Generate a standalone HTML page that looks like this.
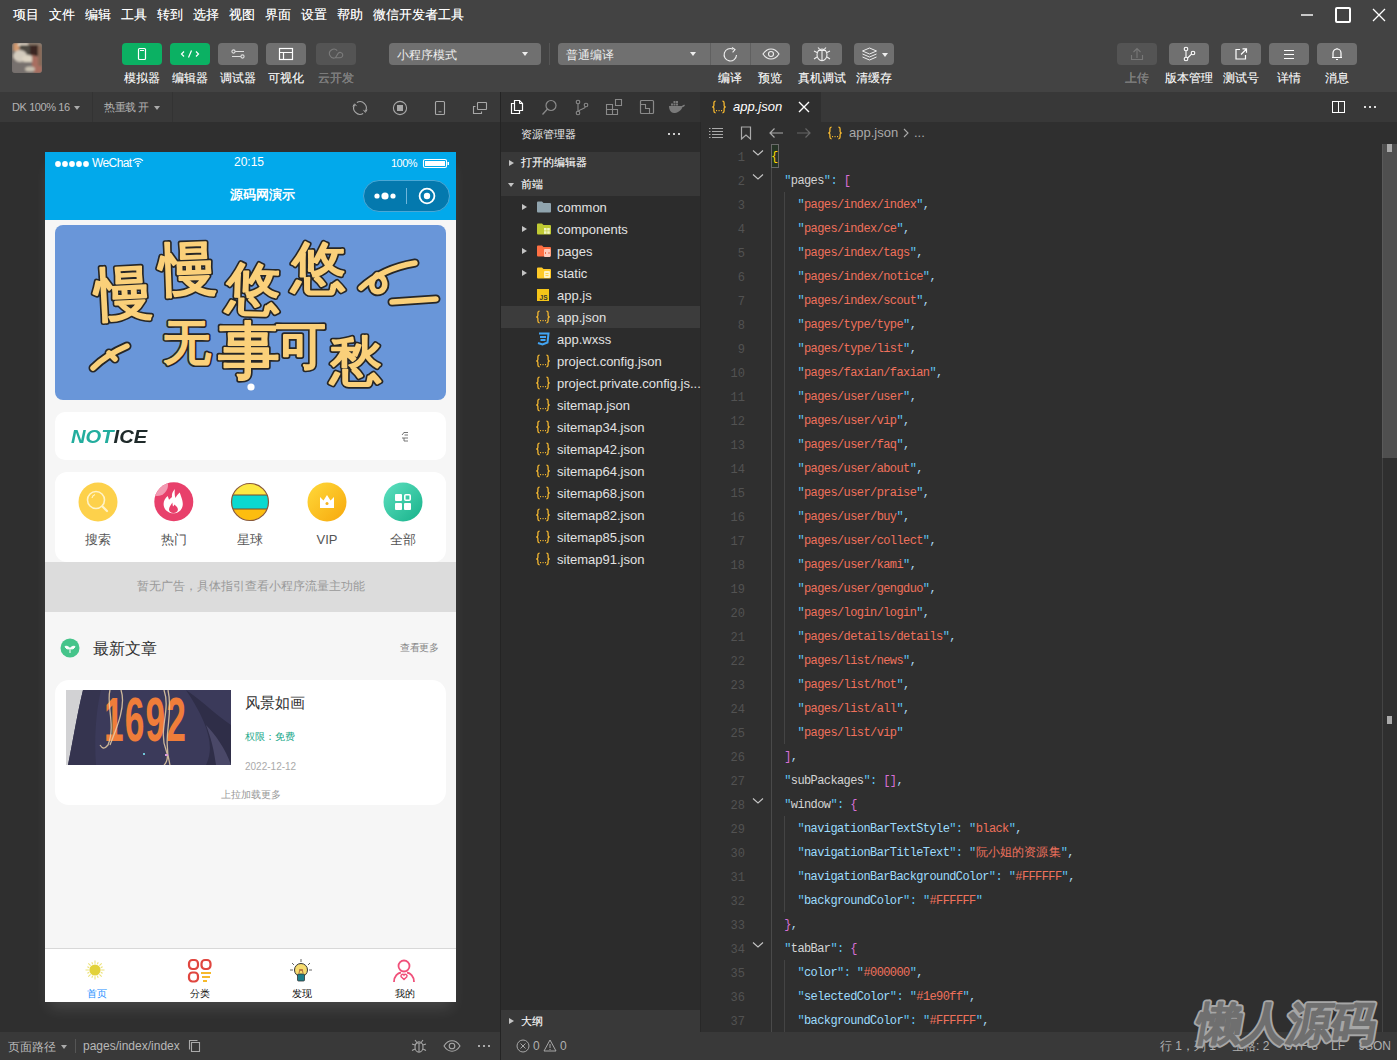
<!DOCTYPE html>
<html><head><meta charset="utf-8">
<style>
*{box-sizing:border-box;margin:0;padding:0}
html,body{width:1397px;height:1060px;overflow:hidden;background:#2f2f2f;font-family:"Liberation Sans",sans-serif;color:#ddd}
.a{position:absolute}
svg{display:block}
/* top */
#top{left:0;top:0;width:1397px;height:92px;background:#434343}
.menu{top:6px;font-size:13px;color:#fff;text-shadow:0.35px 0 0 rgba(255,255,255,.6);line-height:18px;white-space:nowrap}
.btn{top:43px;width:40px;height:22px;border-radius:4px;background:#707070}
.btn.g{background:#0bb163}
.btn.d{background:#545454}
.lbl{top:70px;font-size:12px;line-height:16px;color:#f2f2f2;text-shadow:0.3px 0 0 rgba(255,255,255,.5);text-align:center;white-space:nowrap}
.lbl.d{color:#777}
.dd{top:43px;height:22px;border-radius:4px;background:#707070;font-size:12px;color:#eee;line-height:24px;padding-left:8px}
.tri{width:0;height:0;border-left:3px solid transparent;border-right:3px solid transparent;border-top:4px solid #eee}
/* sim toolbar */
#simtb{left:0;top:92px;width:500px;height:30px;background:#393939}
#simarea{left:0;top:122px;width:500px;height:910px;background:#2f2f2f}
#simst{left:0;top:1032px;width:1397px;height:28px;background:#393939}
#sep{left:500px;top:92px;width:1px;height:968px;background:#242424}
/* explorer */
#exp{left:501px;top:92px;width:199px;height:940px;background:#2c2c2c}
/* editor */
#ed{left:701px;top:92px;width:696px;height:940px;background:#2f2f2f}
.plab{top:380px;width:50px;text-align:center;font-size:13px;line-height:16px;color:#555}
.tlab{top:836px;width:103px;text-align:center;font-size:10px;line-height:12px;color:#111}
.tri2{width:0;height:0;border-top:3px solid transparent;border-bottom:3px solid transparent;border-left:5px solid #c4c4c4}
.tri3{width:0;height:0;border-left:3px solid transparent;border-right:3px solid transparent;border-top:4.5px solid #c4c4c4}
.fn{font-size:13px;line-height:16px;color:#e2e2e2;white-space:nowrap}
.ln{margin-top:2px;left:0;width:44px;text-align:right;font-family:"Liberation Mono",monospace;font-size:12px;line-height:16px;color:#525252}
.code{margin-top:1px;left:70px;font-family:"Liberation Mono",monospace;font-size:12px;line-height:16px;letter-spacing:-0.6px;white-space:pre;color:#d4d4d4}
.code i{font-style:normal}
.q{color:#5fc3f0}.k1{color:#d4d4d4}.k2{color:#9cdcfe}.s{color:#ef715c}.m{color:#d86fd6}.y{color:#ffd700}.w{color:#a9d6ee}
.cj{letter-spacing:0.15px}
</style></head><body>
<div id="top" class="a">
<div class="a menu" style="left:13px">项目</div>
<div class="a menu" style="left:49px">文件</div>
<div class="a menu" style="left:85px">编辑</div>
<div class="a menu" style="left:121px">工具</div>
<div class="a menu" style="left:157px">转到</div>
<div class="a menu" style="left:193px">选择</div>
<div class="a menu" style="left:229px">视图</div>
<div class="a menu" style="left:265px">界面</div>
<div class="a menu" style="left:301px">设置</div>
<div class="a menu" style="left:337px">帮助</div>
<div class="a menu" style="left:373px">微信开发者工具</div>
<!-- window controls -->
<div class="a" style="left:1301px;top:14px;width:12px;height:2px;background:#c8c8c8"></div>
<div class="a" style="left:1335px;top:7px;width:16px;height:16px;border:2px solid #fff;border-radius:2px"></div>
<svg class="a" style="left:1372px;top:8px" width="14" height="14" viewBox="0 0 14 14"><path d="M1 1L13 13M13 1L1 13" stroke="#fff" stroke-width="1.3"/></svg>
<!-- avatar -->
<svg class="a" style="left:12px;top:43px" width="30" height="30" viewBox="0 0 30 30"><defs><clipPath id="avc"><rect width="30" height="30" rx="3"/></clipPath><filter id="avb" x="-10%" y="-10%" width="120%" height="120%"><feGaussianBlur stdDeviation="0.9"/></filter></defs>
<g clip-path="url(#avc)"><rect width="30" height="30" fill="#716a66"/><g filter="url(#avb)">
<rect x="0" y="0" width="30" height="8" fill="#8d7a6c"/>
<rect x="2" y="0" width="5" height="8" fill="#d39a6e"/>
<rect x="6" y="0" width="10" height="3" fill="#e6dccb"/>
<rect x="8" y="2" width="12" height="10" fill="#4d4843"/>
<rect x="18" y="2" width="8" height="11" fill="#3a2622"/>
<ellipse cx="8" cy="13" rx="7" ry="6" fill="#d3cbbd"/>
<ellipse cx="16" cy="16" rx="6" ry="4" fill="#ddd4c3"/>
<rect x="0" y="19" width="24" height="11" fill="#77716e"/>
<path d="M20 12L27 14L30 20V30H22L20 22Z" fill="#a96e60"/>
<ellipse cx="18" cy="26" rx="5" ry="2.5" fill="#c9c1b1"/>
<rect x="26" y="3" width="4" height="20" fill="#8a6a58"/>
</g></g></svg>
<!-- left buttons -->
<div class="a btn g" style="left:122px"><svg width="40" height="22"><rect x="16.5" y="5.5" width="7" height="11" rx="1" fill="none" stroke="#fff" stroke-width="1.2"/><line x1="18" y1="7.5" x2="22" y2="7.5" stroke="#fff" stroke-width="1"/></svg></div>
<div class="a btn g" style="left:170px"><svg width="40" height="22"><path d="M14 8.5L11.5 11L14 13.5M26 8.5L28.5 11L26 13.5M21.5 7.5L18.5 14.5" fill="none" stroke="#fff" stroke-width="1.2"/></svg></div>
<div class="a btn" style="left:218px"><svg width="40" height="22"><path d="M14 8.5H26M14 13.5H26" stroke="#ddd" stroke-width="1.2"/><circle cx="15.5" cy="8.5" r="1.6" fill="#707070" stroke="#ddd" stroke-width="1.1"/><circle cx="24.5" cy="13.5" r="1.6" fill="#707070" stroke="#ddd" stroke-width="1.1"/></svg></div>
<div class="a btn" style="left:266px"><svg width="40" height="22"><rect x="13.5" y="5.5" width="13" height="11" fill="none" stroke="#fff" stroke-width="1.2"/><path d="M13.5 9.5H26.5M17.5 9.5V16.5" stroke="#fff" stroke-width="1.2"/></svg></div>
<div class="a btn d" style="left:316px"><svg width="40" height="22"><path d="M21.2 7.7A4.4 4.4 0 1 0 19.4 14.7H24.2A2.65 2.65 0 1 0 22.3 10.1L19.4 14.7" fill="none" stroke="#7c7c7c" stroke-width="1.1"/></svg></div>
<div class="a lbl" style="left:117px;width:50px">模拟器</div>
<div class="a lbl" style="left:165px;width:50px">编辑器</div>
<div class="a lbl" style="left:213px;width:50px">调试器</div>
<div class="a lbl" style="left:261px;width:50px">可视化</div>
<div class="a lbl d" style="left:311px;width:50px">云开发</div>
<!-- dropdowns -->
<div class="a dd" style="left:389px;width:152px">小程序模式<div class="a tri" style="left:133px;top:9px"></div></div>
<div class="a" style="left:549px;top:43px;width:1px;height:22px;background:#555"></div>
<div class="a dd" style="left:558px;width:232px">普通编译<div class="a tri" style="left:132px;top:9px"></div>
<div class="a" style="left:152px;top:0;width:1px;height:22px;background:#606060"></div>
<div class="a" style="left:192px;top:0;width:1px;height:22px;background:#606060"></div>
</div>
<svg class="a" style="left:710px;top:43px" width="40" height="22"><path d="M26.5 12A6.2 6.2 0 1 1 23 6.2" fill="none" stroke="#eee" stroke-width="1.1"/><path d="M22 4.5L25 6.6L22.6 9.3" fill="none" stroke="#eee" stroke-width="1.1"/></svg>
<svg class="a" style="left:750px;top:43px" width="40" height="22"><path d="M13 11C15.5 7.2 18 6 21 6S26.5 7.2 29 11C26.5 14.8 24 16 21 16S15.5 14.8 13 11Z" fill="none" stroke="#eee" stroke-width="1.1"/><circle cx="21" cy="11" r="2.5" fill="none" stroke="#eee" stroke-width="1.1"/></svg>
<div class="a btn" style="left:802px"><svg width="40" height="22"><ellipse cx="20" cy="11.8" rx="5" ry="5.8" fill="none" stroke="#eee" stroke-width="1.1"/><path d="M20 6.5V17.5M17.5 6.2L16 4.5M22.5 6.2L24 4.5M15 9.5L12 8M25 9.5L28 8M15 14L12 16M25 14L28 16M16 7.5H24" fill="none" stroke="#eee" stroke-width="1.1"/></svg></div>
<div class="a btn" style="left:854px"><svg width="40" height="22"><path d="M8.5 8L15.5 5L22.5 8L15.5 11Z" fill="none" stroke="#eee" stroke-width="1"/><path d="M8.5 11L15.5 14L22.5 11M8.5 14L15.5 17L22.5 14" fill="none" stroke="#eee" stroke-width="1"/></svg><div class="a tri" style="left:28px;top:10px"></div></div>
<div class="a lbl" style="left:710px;width:40px">编译</div>
<div class="a lbl" style="left:750px;width:40px">预览</div>
<div class="a lbl" style="left:792px;width:60px">真机调试</div>
<div class="a lbl" style="left:849px;width:50px">清缓存</div>
<!-- right buttons -->
<div class="a btn d" style="left:1117px"><svg width="40" height="22"><path d="M20 15V6M16.5 9L20 5.5L23.5 9M14.5 12V16.5H25.5V12" fill="none" stroke="#777" stroke-width="1.1"/></svg></div>
<div class="a btn" style="left:1169px"><svg width="40" height="22"><circle cx="17" cy="6" r="1.8" fill="none" stroke="#fff" stroke-width="1.1"/><circle cx="17" cy="16" r="1.8" fill="none" stroke="#fff" stroke-width="1.1"/><circle cx="24" cy="10" r="1.8" fill="none" stroke="#fff" stroke-width="1.1"/><path d="M17 8V14M18.6 15L22.5 11.2" fill="none" stroke="#fff" stroke-width="1.1"/></svg></div>
<div class="a btn" style="left:1221px"><svg width="40" height="22"><path d="M19 6.5H15V16H24.5V12M20 11.5L25 6.5M21.5 5.8H25.5V9.8" fill="none" stroke="#fff" stroke-width="1.2"/></svg></div>
<div class="a btn" style="left:1269px"><svg width="40" height="22"><path d="M15 7.5H25M15 11.5H25M15 15.5H25" stroke="#fff" stroke-width="1"/></svg></div>
<div class="a btn" style="left:1317px"><svg width="40" height="22"><path d="M16 14.5V10a4 4 0 0 1 8 0V14.5H15M25 14.5H24M19 16.5h2M20 5v1" fill="none" stroke="#fff" stroke-width="1.2"/></svg></div>
<div class="a lbl d" style="left:1117px;width:40px">上传</div>
<div class="a lbl" style="left:1159px;width:60px">版本管理</div>
<div class="a lbl" style="left:1216px;width:50px">测试号</div>
<div class="a lbl" style="left:1269px;width:40px">详情</div>
<div class="a lbl" style="left:1317px;width:40px">消息</div>
</div>
<div id="simtb" class="a">
<div class="a" style="left:12px;top:7px;font-size:11px;line-height:16px;color:#b4b4b4;white-space:nowrap;letter-spacing:-0.4px">DK 100% 16</div>
<div class="a tri" style="left:74px;top:14px;border-top-color:#aaa;border-left-width:3px;border-right-width:3px;border-top-width:4px"></div>
<div class="a" style="left:92px;top:0;width:1px;height:30px;background:#333"></div>
<div class="a" style="left:104px;top:7px;letter-spacing:-0.4px;font-size:11px;line-height:16px;color:#b4b4b4;white-space:nowrap">热重载 开</div>
<div class="a tri" style="left:154px;top:14px;border-top-color:#aaa;border-left-width:3px;border-right-width:3px;border-top-width:4px"></div>
<div class="a" style="left:172px;top:0;width:1px;height:30px;background:#333"></div>
<svg class="a" style="left:350px;top:6px" width="20" height="20" viewBox="0 0 20 20"><path d="M6.85 4.54A6.3 6.3 0 0 1 15.46 13.15M13.15 15.46A6.3 6.3 0 0 1 4.54 6.85" fill="none" stroke="#a8a8a8" stroke-width="1.1"/><path d="M2.9 8.4L4.6 5.8L6.5 8.1M13.5 11.9L15.4 14.4L17.1 11.7" fill="none" stroke="#a8a8a8" stroke-width="1"/></svg>
<svg class="a" style="left:390px;top:6px" width="20" height="20" viewBox="0 0 20 20"><circle cx="10" cy="10" r="6.6" fill="none" stroke="#a8a8a8" stroke-width="1.1"/><rect x="7" y="7" width="6" height="6" fill="#a8a8a8"/></svg>
<svg class="a" style="left:430px;top:6px" width="20" height="20" viewBox="0 0 20 20"><rect x="5.5" y="3.5" width="9" height="13" rx="1" fill="none" stroke="#a8a8a8" stroke-width="1.1"/><path d="M8.5 13.8H11.5" stroke="#a8a8a8" stroke-width="1"/></svg>
<svg class="a" style="left:470px;top:6px" width="20" height="20" viewBox="0 0 20 20"><rect x="7.5" y="4.5" width="9" height="7" rx="0.5" fill="none" stroke="#a8a8a8" stroke-width="1.1"/><path d="M5.5 8.5H3.5V15.5H11.5V13.5" fill="none" stroke="#a8a8a8" stroke-width="1.1"/></svg>
</div>
<div id="simarea" class="a"></div>
<div id="phone" class="a" style="left:45px;top:152px;width:411px;height:850px;background:#f6f6f6;box-shadow:0 10px 14px -4px rgba(255,255,255,.12);overflow:hidden">
 <div class="a" style="left:0;top:0;width:411px;height:68px;background:#02a9eb"></div>
 <svg class="a" style="left:9px;top:7px" width="40" height="10"><g fill="#fff"><circle cx="4" cy="5" r="2.9"/><circle cx="11" cy="5" r="2.9"/><circle cx="18" cy="5" r="2.9"/><circle cx="25" cy="5" r="2.9"/><circle cx="32" cy="5" r="2.9"/></g></svg>
 <div class="a" style="left:47px;top:4px;font-size:12px;line-height:14px;color:#fff;letter-spacing:-0.6px">WeChat</div>
 <svg class="a" style="left:87px;top:5px" width="12" height="10" viewBox="0 0 12 10"><path d="M1 3.8A7 7 0 0 1 11 3.8M2.8 5.6A4.5 4.5 0 0 1 9.2 5.6M4.5 7.3A2.2 2.2 0 0 1 7.5 7.3" fill="none" stroke="#fff" stroke-width="1.2"/><circle cx="6" cy="9" r="1" fill="#fff"/></svg>
 <div class="a" style="left:189px;top:3px;font-size:12px;line-height:14px;color:#fff">20:15</div>
 <div class="a" style="left:346px;top:5px;font-size:11px;line-height:13px;color:#fff;letter-spacing:-0.5px">100%</div>
 <svg class="a" style="left:377px;top:6px" width="28" height="11" viewBox="0 0 28 11"><rect x="1.5" y="1.5" width="23" height="8" rx="1.5" fill="none" stroke="#fff" stroke-width="1.1"/><rect x="3" y="3" width="20" height="5" fill="#fff"/><rect x="25.5" y="4" width="1.5" height="3" fill="#fff"/></svg>
 <div class="a" style="left:185px;top:35px;font-size:13px;line-height:16px;color:#fff;font-weight:bold">源码网演示</div>
 <div class="a" style="left:318px;top:28px;width:87px;height:32px;border-radius:16px;background:#0479ae;border:1px solid #4aa8d6"></div>
 <div class="a" style="left:361px;top:36px;width:1px;height:16px;background:#6fb6db"></div>
 <svg class="a" style="left:327px;top:38px" width="26" height="12"><g fill="#fff"><circle cx="5" cy="6" r="2.6"/><circle cx="13" cy="6" r="3.6"/><circle cx="21" cy="6" r="2.6"/></g></svg>
 <svg class="a" style="left:372px;top:34px" width="20" height="20"><circle cx="10" cy="10" r="7.4" fill="none" stroke="#fff" stroke-width="1.8"/><circle cx="10" cy="10" r="3.2" fill="#fff"/></svg>

 <!-- banner -->
 <div class="a" style="left:10px;top:73px;width:391px;height:175px;border-radius:8px;background:#6996d9;overflow:hidden">
  <svg width="391" height="175" viewBox="0 0 391 175" style="position:absolute;left:0;top:0">
   <g text-anchor="middle" font-family="Liberation Sans, sans-serif" stroke-linejoin="round" stroke-linecap="round">
    <g fill="#262626" stroke="#262626" stroke-width="5.5"><text x="68.5" y="88.4" font-size="58" transform="rotate(-3 68.5 67.5)">慢</text><text x="133.5" y="64.4" font-size="58" transform="rotate(-2 133.5 43.5)">慢</text><text x="198.5" y="83.3" font-size="55" transform="rotate(2 198.5 63.5)">悠</text><text x="263" y="61.8" font-size="55" transform="rotate(0 263 42)">悠</text><text x="132" y="133.8" font-size="48" transform="rotate(0 132 116.5)">无</text><text x="193.5" y="147.3" font-size="62" transform="rotate(0 193.5 125)">事</text><text x="246" y="137.5" font-size="50" transform="rotate(0 246 119.5)">可</text><text x="300.5" y="153.7" font-size="52" transform="rotate(0 300.5 135)">愁</text></g>
    <g fill="#fad07a" stroke="#fad07a" stroke-width="2.2"><text x="68.5" y="88.4" font-size="58" transform="rotate(-3 68.5 67.5)">慢</text><text x="133.5" y="64.4" font-size="58" transform="rotate(-2 133.5 43.5)">慢</text><text x="198.5" y="83.3" font-size="55" transform="rotate(2 198.5 63.5)">悠</text><text x="263" y="61.8" font-size="55" transform="rotate(0 263 42)">悠</text><text x="132" y="133.8" font-size="48" transform="rotate(0 132 116.5)">无</text><text x="193.5" y="147.3" font-size="62" transform="rotate(0 193.5 125)">事</text><text x="246" y="137.5" font-size="50" transform="rotate(0 246 119.5)">可</text><text x="300.5" y="153.7" font-size="52" transform="rotate(0 300.5 135)">愁</text></g>
   </g>
   <g fill="none" stroke-linecap="round"><path d="M306 63C318 52 336 42 360 38M322 50C313 58 317 70 326 66C332 62 331 52 322 50M337 77L381 74M38 143C48 133 58 127 72 121M54 128L60 134" stroke="#262626" stroke-width="9"/><path d="M306 63C318 52 336 42 360 38M322 50C313 58 317 70 326 66C332 62 331 52 322 50M337 77L381 74M38 143C48 133 58 127 72 121M54 128L60 134" stroke="#fad07a" stroke-width="5.5"/></g>
   <circle cx="196" cy="162" r="3.6" fill="#fff"/>
  </svg>
 </div>

 <!-- notice -->
 <div class="a" style="left:10px;top:260px;width:391px;height:48px;border-radius:10px;background:#fff"></div>
 <div class="a" style="left:26px;top:276px;font-size:18px;line-height:18px;font-weight:bold;font-style:italic;letter-spacing:0px;white-space:nowrap;transform:scaleX(1.12);transform-origin:left"><span style="color:#23ad9e">NOT</span><span style="color:#1f2a2a">ICE</span></div>
 <svg class="a" style="left:356px;top:279px" width="8" height="11" viewBox="0 0 8 11"><path d="M1 4L3.5 1M3 1.5H7M3.5 4H7M1 7H7M3 7V10H7" fill="none" stroke="#666" stroke-width="0.9"/></svg>

 <!-- icons card -->
 <div class="a" style="left:10px;top:320px;width:391px;height:90px;border-radius:12px;background:#fff"></div>
 <svg class="a" style="left:33px;top:330px" width="40" height="40"><circle cx="20" cy="20" r="19.5" fill="#fdd14b"/><circle cx="18" cy="18" r="8.5" fill="none" stroke="#fff3c8" stroke-width="1.6"/><path d="M24.5 24.5L29 29" stroke="#fff3c8" stroke-width="2.2" stroke-linecap="round"/><path d="M14 16a4.5 4.5 0 0 1 3-3.5" fill="none" stroke="#fff3c8" stroke-width="1.2"/></svg>
 <svg class="a" style="left:109px;top:330px" width="40" height="40"><defs><clipPath id="hc"><circle cx="19.8" cy="19.8" r="19.5"/></clipPath></defs><circle cx="19.8" cy="19.8" r="19.5" fill="#e8406b"/><circle cx="3" cy="3" r="11" fill="#f29ab2" clip-path="url(#hc)"/><path d="M20.9 7.1C19 9 17.5 12 18 15L15 17.7C14.5 16 14 15 13.7 14.1C11 16.5 9.6 19 9.6 22C9.6 27.5 14 31.3 19.5 31.3C25 31.3 28.8 27 28.8 22C28.8 18 26.5 13 25.7 10.5C24 12 22.5 14 21.4 15.9C20.5 13 20.5 10 20.9 7.1Z" fill="#fff"/><path d="M18.4 20.5C17 23 15 25 15 27.5C15 29.8 17 31 19.5 31C22 31 23.9 29.5 23.9 27.5C23.9 25.5 22 24 20.5 22.5C20 23.5 19.5 24 19 24.5C18.7 23 18.4 22 18.4 20.5Z" fill="#e8406b"/></svg>
 <svg class="a" style="left:185px;top:330px" width="40" height="40"><defs><clipPath id="cp"><circle cx="20" cy="20" r="18.5"/></clipPath></defs><g clip-path="url(#cp)"><rect x="0" y="0" width="40" height="13" fill="#fde843"/><rect x="0" y="13" width="40" height="14" fill="#0ad9d0"/><rect x="0" y="27" width="40" height="13" fill="#fdbd0f"/><path d="M0 13H40M0 27H40" stroke="#7a4a2a" stroke-width="1"/></g><circle cx="20" cy="20" r="18.5" fill="none" stroke="#8a5a3a" stroke-width="1.2"/></svg>
 <svg class="a" style="left:262px;top:330px" width="40" height="40"><defs><linearGradient id="vg" x1="0" y1="0" x2="1" y2="1"><stop offset="0" stop-color="#ffd93a"/><stop offset="1" stop-color="#f7a80c"/></linearGradient></defs><circle cx="20" cy="20" r="19.5" fill="url(#vg)"/><path d="M13 15L16.5 18.5L20 13L23.5 18.5L27 15V26H13Z" fill="#fff"/><circle cx="20" cy="21.5" r="1.5" fill="#f5b21d"/></svg>
 <svg class="a" style="left:338px;top:330px" width="40" height="40"><defs><linearGradient id="ag" x1="0" y1="0" x2="1" y2="1"><stop offset="0" stop-color="#5ee0c0"/><stop offset="1" stop-color="#17b28a"/></linearGradient></defs><circle cx="20" cy="20" r="19.5" fill="url(#ag)"/><g fill="#fff"><rect x="12" y="12" width="7" height="7" rx="1"/><rect x="12" y="21" width="7" height="7" rx="1"/><rect x="21" y="21" width="7" height="7" rx="1"/></g><rect x="21.8" y="12.8" width="5.4" height="5.4" rx="1" fill="none" stroke="#fff" stroke-width="1.6"/></svg>
 <div class="a plab" style="left:28px">搜索</div>
 <div class="a plab" style="left:104px">热门</div>
 <div class="a plab" style="left:180px">星球</div>
 <div class="a plab" style="left:257px">VIP</div>
 <div class="a plab" style="left:333px">全部</div>

 <!-- ad -->
 <div class="a" style="left:0;top:410px;width:411px;height:50px;background:#dcdcdc"></div>
 <div class="a" style="left:0;top:426px;width:411px;text-align:center;font-size:12px;line-height:16px;color:#999">暂无广告，具体指引查看小程序流量主功能</div>

 <!-- latest -->
 <svg class="a" style="left:15px;top:486px" width="20" height="20"><circle cx="10" cy="10" r="9.5" fill="#45c48a"/><path d="M10 15V10.5M10 10.5C8.5 8 6 8 5 8.5C6 11 8 11.5 10 10.5M10 10.5C11.5 8 14 8 15 8.5C14 11 12 11.5 10 10.5" fill="#fff" stroke="#fff" stroke-width="1"/></svg>
 <div class="a" style="left:48px;top:487px;font-size:16px;line-height:20px;color:#333">最新文章</div>
 <div class="a" style="left:355px;top:490px;font-size:10px;line-height:12px;color:#888;letter-spacing:-0.5px">查看更多</div>

 <!-- article card -->
 <div class="a" style="left:10px;top:528px;width:391px;height:125px;border-radius:14px;background:#fff"></div>
 <div class="a" style="left:21px;top:538px;width:165px;height:75px;overflow:hidden">
  <svg width="165" height="75" viewBox="0 0 165 75" style="position:absolute;left:0;top:0">
   <rect width="165" height="75" fill="#3b3a5a"/>
   <path d="M0 0H17C12 20 8 45 2 75H0Z" fill="#d2d2d4"/>
   <path d="M17 0C12 20 8 45 2 75H30C28 50 30 20 35 0Z" fill="#35344f"/>
   <path d="M120 0C135 10 150 25 165 35V75H140C150 55 140 30 120 0Z" fill="#2f2e48"/>
   <path d="M140 35C150 45 160 60 165 75H150C148 60 145 48 140 35Z" fill="#4a4868"/>
   <text x="38" y="51" font-size="63" font-weight="bold" font-family="Liberation Sans, sans-serif" fill="#ef7d3a" transform="translate(38 0) scale(0.56 1) translate(-38 0)" letter-spacing="2">1692</text>
   <path d="M44 0C40 15 50 35 42 55C38 60 36 58 34 55M55 0C60 15 52 35 44 55M98 0C105 20 92 40 100 60C104 70 98 75 98 75M102 0C108 25 96 45 104 75" fill="none" stroke="#e8cfa6" stroke-width="1.3" opacity=".85"/>
   <rect x="77" y="63" width="2" height="2" fill="#6fc6d8"/><rect x="99" y="64" width="3" height="2" fill="#d89ad8"/>
  </svg>
 </div>
 <div class="a" style="left:200px;top:542px;font-size:15px;line-height:18px;color:#333">风景如画</div>
 <div class="a" style="left:200px;top:579px;font-size:10px;line-height:12px;color:#1aa88a">权限：免费</div>
 <div class="a" style="left:200px;top:609px;font-size:10px;line-height:12px;color:#aaa">2022-12-12</div>
 <div class="a" style="left:0;top:637px;width:411px;text-align:center;font-size:10px;line-height:12px;color:#999">上拉加载更多</div>

 <!-- tabbar -->
 <div class="a" style="left:0;top:796px;width:411px;height:54px;background:#fff;border-top:1px solid #d8d8d8"></div>
 <svg class="a" style="left:39px;top:807px" width="22" height="22" viewBox="0 0 22 22"><circle cx="11" cy="11" r="5.6" fill="#e2d23a"/><path d="M17.20 11.00L20.50 11.00M16.73 13.37L18.67 14.18M15.38 15.38L17.72 17.72M13.37 16.73L14.18 18.67M11.00 17.20L11.00 20.50M8.63 16.73L7.82 18.67M6.62 15.38L4.28 17.72M5.27 13.37L3.33 14.18M4.80 11.00L1.50 11.00M5.27 8.63L3.33 7.82M6.62 6.62L4.28 4.28M8.63 5.27L7.82 3.33M11.00 4.80L11.00 1.50M13.37 5.27L14.18 3.33M15.38 6.62L17.72 4.28M16.73 8.63L18.67 7.82" stroke="#ece27a" stroke-width="1.1"/></svg>
 <svg class="a" style="left:142px;top:806px" width="26" height="26" viewBox="0 0 26 26"><g fill="none" stroke="#e0463f" stroke-width="2.2"><rect x="2" y="2" width="9" height="9" rx="3.5"/><rect x="14.5" y="2" width="9" height="9" rx="3.5"/><rect x="2" y="14.5" width="9" height="9" rx="3.5"/></g><g stroke="#f6b92b" stroke-width="2"><path d="M14 15H24M15 19H23M16 23H20"/></g></svg>
 <svg class="a" style="left:244px;top:806px" width="24" height="26" viewBox="0 0 24 26"><g stroke="#666" stroke-width="1"><path d="M12 1V4M3 5L5 7M21 5L19 7M1 12H4M20 12H23"/></g><circle cx="12" cy="12" r="6.5" fill="#f7dc6f" stroke="#333" stroke-width="1"/><rect x="8.5" y="16" width="7" height="7" rx="1" fill="#1e7f8a" stroke="#333" stroke-width="0.8"/><path d="M10 15L11 11L12 13L13 11L14 15" fill="none" stroke="#a0522d" stroke-width="0.8"/></svg>
 <svg class="a" style="left:347px;top:806px" width="24" height="26" viewBox="0 0 24 26"><g fill="none" stroke="#f0517a" stroke-width="1.8"><circle cx="12" cy="8" r="5.5"/><path d="M2 24C2 18 6 15 9 14.5M22 24C22 18 18 15 15 14.5"/></g><path d="M12 21.5L9.2 18.8A1.6 1.6 0 0 1 12 17.2A1.6 1.6 0 0 1 14.8 18.8Z" fill="none" stroke="#f0517a" stroke-width="1.4"/></svg>
 <div class="a tlab" style="left:0;color:#1e90ff">首页</div>
 <div class="a tlab" style="left:103px">分类</div>
 <div class="a tlab" style="left:205px">发现</div>
 <div class="a tlab" style="left:308px">我的</div>
</div>
<div id="simst" class="a">
<div class="a" style="left:8px;top:7px;font-size:12px;line-height:16px;color:#b8b8b8">页面路径</div>
<div class="a tri" style="left:61px;top:13px;border-top-color:#aaa;border-left-width:3px;border-right-width:3px;border-top-width:4px"></div>
<div class="a" style="left:75px;top:7px;width:1px;height:14px;background:#555"></div>
<div class="a" style="left:83px;top:6px;font-size:12px;line-height:16px;color:#b8b8b8;white-space:nowrap">pages/index/index</div>
<svg class="a" style="left:187px;top:7px" width="14" height="14" viewBox="0 0 14 14"><path d="M4.5 3.5H12.5V12.5H4.5Z" fill="none" stroke="#aaa" stroke-width="1.1"/><path d="M2.5 10.5V1.5H10.5" fill="none" stroke="#aaa" stroke-width="1.1"/></svg>
<svg class="a" style="left:410px;top:5px" width="18" height="18" viewBox="0 0 18 18"><ellipse cx="9" cy="10" rx="4" ry="5.2" fill="none" stroke="#a8a8a8" stroke-width="1.1"/><path d="M9 5.5V15M6.5 5L5 3M11.5 5L13 3M5 8L2 7M13 8L16 7M5 12L2 13.5M13 12L16 13.5M6 6H12" fill="none" stroke="#a8a8a8" stroke-width="1.1"/></svg>
<svg class="a" style="left:443px;top:7px" width="18" height="14" viewBox="0 0 18 14"><path d="M1 7C3.5 3 6 1.8 9 1.8S14.5 3 17 7C14.5 11 12 12.2 9 12.2S3.5 11 1 7Z" fill="none" stroke="#a8a8a8" stroke-width="1.1"/><circle cx="9" cy="7" r="2.8" fill="none" stroke="#a8a8a8" stroke-width="1.1"/></svg>
<svg class="a" style="left:477px;top:13px" width="14" height="3"><g fill="#aaa"><rect x="1" y="0" width="2" height="2"/><rect x="6" y="0" width="2" height="2"/><rect x="11" y="0" width="2" height="2"/></g></svg>
<svg class="a" style="left:516px;top:7px" width="14" height="14" viewBox="0 0 14 14"><circle cx="7" cy="7" r="6" fill="none" stroke="#a8a8a8" stroke-width="1"/><path d="M4.5 4.5L9.5 9.5M9.5 4.5L4.5 9.5" stroke="#a8a8a8" stroke-width="1"/></svg>
<div class="a" style="left:533px;top:6px;font-size:12px;line-height:16px;color:#b0b0b0">0</div>
<svg class="a" style="left:543px;top:7px" width="14" height="13" viewBox="0 0 14 13"><path d="M7 1L13 12H1Z" fill="none" stroke="#a8a8a8" stroke-width="1"/><path d="M7 5V9M7 10V11" stroke="#a8a8a8" stroke-width="1"/></svg>
<div class="a" style="left:560px;top:6px;font-size:12px;line-height:16px;color:#b0b0b0">0</div>
<div class="a" style="left:1160px;top:6px;font-size:12px;line-height:16px;color:#b0b0b0;white-space:pre">行 1，列 1</div>
<div class="a" style="left:1232px;top:6px;font-size:12px;line-height:16px;color:#b0b0b0;white-space:pre">空格: 2</div>
<div class="a" style="left:1284px;top:6px;font-size:12px;line-height:16px;color:#b0b0b0;white-space:pre">UTF-8</div>
<div class="a" style="left:1331px;top:6px;font-size:12px;line-height:16px;color:#b0b0b0;white-space:pre">LF</div>
<div class="a" style="left:1359px;top:6px;font-size:12px;line-height:16px;color:#b0b0b0;white-space:pre">JSON</div>
</div>
<div id="sep" class="a"></div><div class="a" style="left:700px;top:122px;width:1px;height:910px;background:#282828"></div>
<div id="exp" class="a">
<div class="a" style="left:0;top:0;width:199px;height:30px;background:#333"></div>
<svg class="a" style="left:8px;top:7px" width="16" height="16" viewBox="0 0 16 16"><path d="M5.5 4.5V13.5H12.5V4.5Z" fill="none" stroke="#fff" stroke-width="0"/><path d="M5.5 1.5H10.5L13.5 4.5V11.5H5.5Z" fill="none" stroke="#fff" stroke-width="1.2"/><path d="M10.5 1.5V4.5H13.5" fill="none" stroke="#fff" stroke-width="1"/><path d="M5.5 4.5H2.5V14.5H10.5V11.5" fill="none" stroke="#fff" stroke-width="1.2"/></svg>
<svg class="a" style="left:40px;top:7px" width="17" height="17" viewBox="0 0 17 17"><circle cx="10" cy="6.5" r="5" fill="none" stroke="#8a8a8a" stroke-width="1.2"/><path d="M6.5 10L1.5 15.5" stroke="#8a8a8a" stroke-width="1.3"/></svg>
<svg class="a" style="left:73px;top:7px" width="16" height="17" viewBox="0 0 16 17"><circle cx="4" cy="3" r="1.8" fill="none" stroke="#8a8a8a" stroke-width="1.1"/><circle cx="4" cy="14" r="1.8" fill="none" stroke="#8a8a8a" stroke-width="1.1"/><circle cx="12" cy="6" r="1.8" fill="none" stroke="#8a8a8a" stroke-width="1.1"/><path d="M4 4.8V12.2M11.5 7.7C11 10 6 10 4.5 12.5" fill="none" stroke="#8a8a8a" stroke-width="1.1"/></svg>
<svg class="a" style="left:104px;top:6px" width="18" height="18" viewBox="0 0 18 18"><path d="M1.5 6.5H7.5V16.5H1.5ZM1.5 11.5H12.5V16.5H7.5M10.5 1.5H16.5V7.5H10.5Z" fill="none" stroke="#8a8a8a" stroke-width="1.1"/></svg>
<svg class="a" style="left:138px;top:7px" width="16" height="16" viewBox="0 0 16 16"><rect x="1.5" y="1.5" width="13" height="13" rx="1" fill="none" stroke="#8a8a8a" stroke-width="1.2"/><path d="M1.5 5.5H6.5V9.5H10.5V14.5" fill="none" stroke="#8a8a8a" stroke-width="1.1"/></svg>
<svg class="a" style="left:167px;top:8px" width="18" height="14" viewBox="0 0 18 14"><path d="M1 6H14C15 5 16 4.5 17 5C16.5 6.5 15.5 7 14.5 7C13 11 9 13 6 13C3 13 1 10 1 6Z" fill="#7a7a7a"/><g fill="#7a7a7a"><rect x="3" y="3.5" width="2" height="2"/><rect x="5.5" y="3.5" width="2" height="2"/><rect x="8" y="3.5" width="2" height="2"/><rect x="5.5" y="1" width="2" height="2"/><rect x="8" y="1" width="2" height="2"/></g></svg>
<div class="a" style="left:20px;top:35px;font-size:11px;line-height:14px;color:#ececec">资源管理器</div>
<svg class="a" style="left:166px;top:41px" width="14" height="3"><g fill="#ccc"><rect x="1" y="0" width="2" height="2"/><rect x="6" y="0" width="2" height="2"/><rect x="11" y="0" width="2" height="2"/></g></svg>
<div class="a" style="left:0;top:60px;width:199px;height:44px;background:#383838"></div>
<div class="a tri2" style="left:8px;top:68px"></div>
<div class="a" style="left:20px;top:63px;font-size:11px;line-height:14px;color:#f0f0f0;text-shadow:0.3px 0 0 rgba(255,255,255,.5)">打开的编辑器</div>
<div class="a tri3" style="left:7px;top:91px"></div>
<div class="a" style="left:20px;top:85px;font-size:11px;line-height:14px;color:#f0f0f0;text-shadow:0.3px 0 0 rgba(255,255,255,.5)">前端</div>
<div class="a tri2" style="left:21px;top:112px"></div>
<svg class="a" style="left:35px;top:108px" width="16" height="14" viewBox="0 0 16 14"><path d="M1 2.5A1 1 0 0 1 2 1.5H6L7.5 3H14A1 1 0 0 1 15 4V11.5A1 1 0 0 1 14 12.5H2A1 1 0 0 1 1 11.5Z" fill="#90a4ae"/></svg>
<div class="a fn" style="left:56px;top:108px">common</div>
<div class="a tri2" style="left:21px;top:134px"></div>
<svg class="a" style="left:35px;top:130px" width="16" height="14" viewBox="0 0 16 14"><path d="M1 2.5A1 1 0 0 1 2 1.5H6L7.5 3H14A1 1 0 0 1 15 4V11.5A1 1 0 0 1 14 12.5H2A1 1 0 0 1 1 11.5Z" fill="#c0ca33"/><g fill="#f0f4c3"><rect x="8" y="6" width="2.6" height="2.6"/><rect x="11.2" y="6" width="2.6" height="2.6"/><rect x="8" y="9.2" width="2.6" height="2.6"/><rect x="11.2" y="9.2" width="2.6" height="2.6"/></g></svg>
<div class="a fn" style="left:56px;top:130px">components</div>
<div class="a tri2" style="left:21px;top:156px"></div>
<svg class="a" style="left:35px;top:152px" width="16" height="14" viewBox="0 0 16 14"><path d="M1 2.5A1 1 0 0 1 2 1.5H6L7.5 3H14A1 1 0 0 1 15 4V11.5A1 1 0 0 1 14 12.5H2A1 1 0 0 1 1 11.5Z" fill="#ff7043"/><rect x="8" y="5" width="6.5" height="8" rx="1" fill="#ffccbc"/><path d="M10 8L9 9L10 10M12.5 8L13.5 9L12.5 10" fill="none" stroke="#e64a19" stroke-width="0.7"/></svg>
<div class="a fn" style="left:56px;top:152px">pages</div>
<div class="a tri2" style="left:21px;top:178px"></div>
<svg class="a" style="left:35px;top:174px" width="16" height="14" viewBox="0 0 16 14"><path d="M1 2.5A1 1 0 0 1 2 1.5H6L7.5 3H14A1 1 0 0 1 15 4V11.5A1 1 0 0 1 14 12.5H2A1 1 0 0 1 1 11.5Z" fill="#ffca28"/><rect x="8" y="5" width="6" height="7" rx="1" fill="#fff3c4"/><path d="M9.5 7.5H12.5M9.5 9.5H12.5" stroke="#ffca28" stroke-width="0.8"/></svg>
<div class="a fn" style="left:56px;top:174px">static</div>
<svg class="a" style="left:36px;top:197px" width="12" height="12" viewBox="0 0 12 12"><rect width="12" height="12" fill="#f5c518"/><text x="2.6" y="10.5" font-size="6.5" font-family="Liberation Sans" font-weight="bold" fill="#333">JS</text></svg>
<div class="a fn" style="left:56px;top:196px">app.js</div>
<div class="a" style="left:0;top:214px;width:199px;height:22px;background:#3c3c3c"></div>
<svg class="a" style="left:34px;top:218px" width="16" height="14" viewBox="0 0 16 14"><path d="M4.6 1.2Q2.9 1.2 2.9 2.9V5.6Q2.9 7 1.3 7Q2.9 7 2.9 8.4V11.1Q2.9 12.8 4.6 12.8M11.4 1.2Q13.1 1.2 13.1 2.9V5.6Q13.1 7 14.7 7Q13.1 7 13.1 8.4V11.1Q13.1 12.8 11.4 12.8" fill="none" stroke="#f2b630" stroke-width="1.3"/><g fill="#f2b630"><rect x="5" y="10" width="1.1" height="1.2"/><rect x="7.5" y="10" width="1.1" height="1.2"/><rect x="10" y="10" width="1.1" height="1.2"/></g></svg>
<div class="a fn" style="left:56px;top:218px">app.json</div>
<svg class="a" style="left:35px;top:240px" width="14" height="14" viewBox="0 0 14 14"><path d="M2.5 1.5H12L11 11L6 13L2 11.5L2.3 9.5" fill="none" stroke="#42a5f5" stroke-width="0"/><path d="M3 1.5H12.5L11.5 10.5L6.5 12.5L2 11" fill="none" stroke="#42a5f5" stroke-width="2"/><path d="M4 5H10M4.5 8H9.5" stroke="#42a5f5" stroke-width="1.8"/></svg>
<div class="a fn" style="left:56px;top:240px">app.wxss</div>
<svg class="a" style="left:34px;top:262px" width="16" height="14" viewBox="0 0 16 14"><path d="M4.6 1.2Q2.9 1.2 2.9 2.9V5.6Q2.9 7 1.3 7Q2.9 7 2.9 8.4V11.1Q2.9 12.8 4.6 12.8M11.4 1.2Q13.1 1.2 13.1 2.9V5.6Q13.1 7 14.7 7Q13.1 7 13.1 8.4V11.1Q13.1 12.8 11.4 12.8" fill="none" stroke="#f2b630" stroke-width="1.3"/><g fill="#f2b630"><rect x="5" y="10" width="1.1" height="1.2"/><rect x="7.5" y="10" width="1.1" height="1.2"/><rect x="10" y="10" width="1.1" height="1.2"/></g></svg>
<div class="a fn" style="left:56px;top:262px">project.config.json</div>
<svg class="a" style="left:34px;top:284px" width="16" height="14" viewBox="0 0 16 14"><path d="M4.6 1.2Q2.9 1.2 2.9 2.9V5.6Q2.9 7 1.3 7Q2.9 7 2.9 8.4V11.1Q2.9 12.8 4.6 12.8M11.4 1.2Q13.1 1.2 13.1 2.9V5.6Q13.1 7 14.7 7Q13.1 7 13.1 8.4V11.1Q13.1 12.8 11.4 12.8" fill="none" stroke="#f2b630" stroke-width="1.3"/><g fill="#f2b630"><rect x="5" y="10" width="1.1" height="1.2"/><rect x="7.5" y="10" width="1.1" height="1.2"/><rect x="10" y="10" width="1.1" height="1.2"/></g></svg>
<div class="a fn" style="left:56px;top:284px">project.private.config.js...</div>
<svg class="a" style="left:34px;top:306px" width="16" height="14" viewBox="0 0 16 14"><path d="M4.6 1.2Q2.9 1.2 2.9 2.9V5.6Q2.9 7 1.3 7Q2.9 7 2.9 8.4V11.1Q2.9 12.8 4.6 12.8M11.4 1.2Q13.1 1.2 13.1 2.9V5.6Q13.1 7 14.7 7Q13.1 7 13.1 8.4V11.1Q13.1 12.8 11.4 12.8" fill="none" stroke="#f2b630" stroke-width="1.3"/><g fill="#f2b630"><rect x="5" y="10" width="1.1" height="1.2"/><rect x="7.5" y="10" width="1.1" height="1.2"/><rect x="10" y="10" width="1.1" height="1.2"/></g></svg>
<div class="a fn" style="left:56px;top:306px">sitemap.json</div>
<svg class="a" style="left:34px;top:328px" width="16" height="14" viewBox="0 0 16 14"><path d="M4.6 1.2Q2.9 1.2 2.9 2.9V5.6Q2.9 7 1.3 7Q2.9 7 2.9 8.4V11.1Q2.9 12.8 4.6 12.8M11.4 1.2Q13.1 1.2 13.1 2.9V5.6Q13.1 7 14.7 7Q13.1 7 13.1 8.4V11.1Q13.1 12.8 11.4 12.8" fill="none" stroke="#f2b630" stroke-width="1.3"/><g fill="#f2b630"><rect x="5" y="10" width="1.1" height="1.2"/><rect x="7.5" y="10" width="1.1" height="1.2"/><rect x="10" y="10" width="1.1" height="1.2"/></g></svg>
<div class="a fn" style="left:56px;top:328px">sitemap34.json</div>
<svg class="a" style="left:34px;top:350px" width="16" height="14" viewBox="0 0 16 14"><path d="M4.6 1.2Q2.9 1.2 2.9 2.9V5.6Q2.9 7 1.3 7Q2.9 7 2.9 8.4V11.1Q2.9 12.8 4.6 12.8M11.4 1.2Q13.1 1.2 13.1 2.9V5.6Q13.1 7 14.7 7Q13.1 7 13.1 8.4V11.1Q13.1 12.8 11.4 12.8" fill="none" stroke="#f2b630" stroke-width="1.3"/><g fill="#f2b630"><rect x="5" y="10" width="1.1" height="1.2"/><rect x="7.5" y="10" width="1.1" height="1.2"/><rect x="10" y="10" width="1.1" height="1.2"/></g></svg>
<div class="a fn" style="left:56px;top:350px">sitemap42.json</div>
<svg class="a" style="left:34px;top:372px" width="16" height="14" viewBox="0 0 16 14"><path d="M4.6 1.2Q2.9 1.2 2.9 2.9V5.6Q2.9 7 1.3 7Q2.9 7 2.9 8.4V11.1Q2.9 12.8 4.6 12.8M11.4 1.2Q13.1 1.2 13.1 2.9V5.6Q13.1 7 14.7 7Q13.1 7 13.1 8.4V11.1Q13.1 12.8 11.4 12.8" fill="none" stroke="#f2b630" stroke-width="1.3"/><g fill="#f2b630"><rect x="5" y="10" width="1.1" height="1.2"/><rect x="7.5" y="10" width="1.1" height="1.2"/><rect x="10" y="10" width="1.1" height="1.2"/></g></svg>
<div class="a fn" style="left:56px;top:372px">sitemap64.json</div>
<svg class="a" style="left:34px;top:394px" width="16" height="14" viewBox="0 0 16 14"><path d="M4.6 1.2Q2.9 1.2 2.9 2.9V5.6Q2.9 7 1.3 7Q2.9 7 2.9 8.4V11.1Q2.9 12.8 4.6 12.8M11.4 1.2Q13.1 1.2 13.1 2.9V5.6Q13.1 7 14.7 7Q13.1 7 13.1 8.4V11.1Q13.1 12.8 11.4 12.8" fill="none" stroke="#f2b630" stroke-width="1.3"/><g fill="#f2b630"><rect x="5" y="10" width="1.1" height="1.2"/><rect x="7.5" y="10" width="1.1" height="1.2"/><rect x="10" y="10" width="1.1" height="1.2"/></g></svg>
<div class="a fn" style="left:56px;top:394px">sitemap68.json</div>
<svg class="a" style="left:34px;top:416px" width="16" height="14" viewBox="0 0 16 14"><path d="M4.6 1.2Q2.9 1.2 2.9 2.9V5.6Q2.9 7 1.3 7Q2.9 7 2.9 8.4V11.1Q2.9 12.8 4.6 12.8M11.4 1.2Q13.1 1.2 13.1 2.9V5.6Q13.1 7 14.7 7Q13.1 7 13.1 8.4V11.1Q13.1 12.8 11.4 12.8" fill="none" stroke="#f2b630" stroke-width="1.3"/><g fill="#f2b630"><rect x="5" y="10" width="1.1" height="1.2"/><rect x="7.5" y="10" width="1.1" height="1.2"/><rect x="10" y="10" width="1.1" height="1.2"/></g></svg>
<div class="a fn" style="left:56px;top:416px">sitemap82.json</div>
<svg class="a" style="left:34px;top:438px" width="16" height="14" viewBox="0 0 16 14"><path d="M4.6 1.2Q2.9 1.2 2.9 2.9V5.6Q2.9 7 1.3 7Q2.9 7 2.9 8.4V11.1Q2.9 12.8 4.6 12.8M11.4 1.2Q13.1 1.2 13.1 2.9V5.6Q13.1 7 14.7 7Q13.1 7 13.1 8.4V11.1Q13.1 12.8 11.4 12.8" fill="none" stroke="#f2b630" stroke-width="1.3"/><g fill="#f2b630"><rect x="5" y="10" width="1.1" height="1.2"/><rect x="7.5" y="10" width="1.1" height="1.2"/><rect x="10" y="10" width="1.1" height="1.2"/></g></svg>
<div class="a fn" style="left:56px;top:438px">sitemap85.json</div>
<svg class="a" style="left:34px;top:460px" width="16" height="14" viewBox="0 0 16 14"><path d="M4.6 1.2Q2.9 1.2 2.9 2.9V5.6Q2.9 7 1.3 7Q2.9 7 2.9 8.4V11.1Q2.9 12.8 4.6 12.8M11.4 1.2Q13.1 1.2 13.1 2.9V5.6Q13.1 7 14.7 7Q13.1 7 13.1 8.4V11.1Q13.1 12.8 11.4 12.8" fill="none" stroke="#f2b630" stroke-width="1.3"/><g fill="#f2b630"><rect x="5" y="10" width="1.1" height="1.2"/><rect x="7.5" y="10" width="1.1" height="1.2"/><rect x="10" y="10" width="1.1" height="1.2"/></g></svg>
<div class="a fn" style="left:56px;top:460px">sitemap91.json</div>
<div class="a" style="left:0;top:918px;width:199px;height:22px;background:#393939"></div>
<div class="a tri2" style="left:8px;top:926px"></div>
<div class="a" style="left:20px;top:922px;font-size:11px;line-height:14px;color:#f0f0f0;text-shadow:0.3px 0 0 rgba(255,255,255,.5)">大纲</div>
</div>
<div id="ed" class="a">
<div class="a" style="left:0;top:0;width:696px;height:30px;background:#383838"></div>
<div class="a" style="left:0;top:0;width:120px;height:30px;background:#2f2f2f"></div>
<svg class="a" style="left:10px;top:8px" width="16" height="14" viewBox="0 0 16 14"><path d="M4.6 1.2Q2.9 1.2 2.9 2.9V5.6Q2.9 7 1.3 7Q2.9 7 2.9 8.4V11.1Q2.9 12.8 4.6 12.8M11.4 1.2Q13.1 1.2 13.1 2.9V5.6Q13.1 7 14.7 7Q13.1 7 13.1 8.4V11.1Q13.1 12.8 11.4 12.8" fill="none" stroke="#f2b630" stroke-width="1.3"/><g fill="#f2b630"><rect x="5" y="10" width="1.1" height="1.2"/><rect x="7.5" y="10" width="1.1" height="1.2"/><rect x="10" y="10" width="1.1" height="1.2"/></g></svg>
<div class="a" style="left:32px;top:7px;font-size:13px;line-height:16px;color:#fff;font-style:italic">app.json</div>
<svg class="a" style="left:97px;top:9px" width="12" height="12" viewBox="0 0 12 12"><path d="M1 1L11 11M11 1L1 11" stroke="#fff" stroke-width="1.4"/></svg>
<svg class="a" style="left:631px;top:9px" width="13" height="12" viewBox="0 0 13 12"><rect x="0.5" y="0.5" width="12" height="11" fill="none" stroke="#fff" stroke-width="1"/><path d="M6.5 0.5V11.5" stroke="#fff" stroke-width="1"/></svg>
<svg class="a" style="left:662px;top:14px" width="14" height="3"><g fill="#ddd"><rect x="1" y="0" width="2" height="2"/><rect x="6" y="0" width="2" height="2"/><rect x="11" y="0" width="2" height="2"/></g></svg>
<svg class="a" style="left:7px;top:35px" width="16" height="12" viewBox="0 0 16 12"><g stroke="#aaa" stroke-width="1"><path d="M4 1.5H15M4 4.5H15M4 7.5H15M4 10.5H15M1 1.5H2.5M1 4.5H2.5M1 7.5H2.5M1 10.5H2.5"/></g></svg>
<svg class="a" style="left:39px;top:34px" width="12" height="14" viewBox="0 0 12 14"><path d="M1.5 1V13L6 9L10.5 13V1Z" fill="none" stroke="#aaa" stroke-width="1.2"/></svg>
<svg class="a" style="left:67px;top:35px" width="16" height="12" viewBox="0 0 16 12"><path d="M15 6H2M6.5 1.5L2 6L6.5 10.5" fill="none" stroke="#aaa" stroke-width="1.2"/></svg>
<svg class="a" style="left:95px;top:35px" width="16" height="12" viewBox="0 0 16 12"><path d="M1 6H14M9.5 1.5L14 6L9.5 10.5" fill="none" stroke="#666" stroke-width="1.2"/></svg>
<svg class="a" style="left:126px;top:34px" width="16" height="14" viewBox="0 0 16 14"><path d="M4.6 1.2Q2.9 1.2 2.9 2.9V5.6Q2.9 7 1.3 7Q2.9 7 2.9 8.4V11.1Q2.9 12.8 4.6 12.8M11.4 1.2Q13.1 1.2 13.1 2.9V5.6Q13.1 7 14.7 7Q13.1 7 13.1 8.4V11.1Q13.1 12.8 11.4 12.8" fill="none" stroke="#f2b630" stroke-width="1.3"/><g fill="#f2b630"><rect x="5" y="10" width="1.1" height="1.2"/><rect x="7.5" y="10" width="1.1" height="1.2"/><rect x="10" y="10" width="1.1" height="1.2"/></g></svg>
<div class="a" style="left:148px;top:33px;font-size:13px;line-height:16px;color:#aaa">app.json</div>
<svg class="a" style="left:201px;top:36px" width="8" height="10" viewBox="0 0 8 10"><path d="M2 1L6 5L2 9" fill="none" stroke="#aaa" stroke-width="1.1"/></svg>
<div class="a" style="left:213px;top:33px;font-size:13px;line-height:16px;color:#aaa">...</div>
<div class="a" style="left:70px;top:52px;width:8px;height:24px;border:1px solid #6a6a6a;background:#263326"></div>
<div class="a" style="left:70px;top:76px;width:1px;height:864px;background:#4a4a4a"></div>
<div class="a" style="left:83px;top:100px;width:1px;height:552px;background:#444"></div>
<div class="a" style="left:83px;top:724px;width:1px;height:96px;background:#444"></div>
<div class="a" style="left:83px;top:868px;width:1px;height:72px;background:#444"></div>
<svg class="a" style="left:51px;top:57px" width="12" height="8" viewBox="0 0 12 8"><path d="M1 1.5L6 6L11 1.5" fill="none" stroke="#c5c5c5" stroke-width="1.1"/></svg><svg class="a" style="left:51px;top:81px" width="12" height="8" viewBox="0 0 12 8"><path d="M1 1.5L6 6L11 1.5" fill="none" stroke="#c5c5c5" stroke-width="1.1"/></svg><svg class="a" style="left:51px;top:705px" width="12" height="8" viewBox="0 0 12 8"><path d="M1 1.5L6 6L11 1.5" fill="none" stroke="#c5c5c5" stroke-width="1.1"/></svg><svg class="a" style="left:51px;top:849px" width="12" height="8" viewBox="0 0 12 8"><path d="M1 1.5L6 6L11 1.5" fill="none" stroke="#c5c5c5" stroke-width="1.1"/></svg><div class="a ln" style="top:56px">1</div>
<div class="a code" style="top:56px"><i class="y">{</i></div>
<div class="a ln" style="top:80px">2</div>
<div class="a code" style="top:80px">  <i class="q">"</i><i class="k1">pages</i><i class="q">"</i><i class="q">:</i> <i class="m">[</i></div>
<div class="a ln" style="top:104px">3</div>
<div class="a code" style="top:104px">    <i class="q">"</i><i class="s">pages/index/index</i><i class="q">"</i><i class="w">,</i></div>
<div class="a ln" style="top:128px">4</div>
<div class="a code" style="top:128px">    <i class="q">"</i><i class="s">pages/index/ce</i><i class="q">"</i><i class="w">,</i></div>
<div class="a ln" style="top:152px">5</div>
<div class="a code" style="top:152px">    <i class="q">"</i><i class="s">pages/index/tags</i><i class="q">"</i><i class="w">,</i></div>
<div class="a ln" style="top:176px">6</div>
<div class="a code" style="top:176px">    <i class="q">"</i><i class="s">pages/index/notice</i><i class="q">"</i><i class="w">,</i></div>
<div class="a ln" style="top:200px">7</div>
<div class="a code" style="top:200px">    <i class="q">"</i><i class="s">pages/index/scout</i><i class="q">"</i><i class="w">,</i></div>
<div class="a ln" style="top:224px">8</div>
<div class="a code" style="top:224px">    <i class="q">"</i><i class="s">pages/type/type</i><i class="q">"</i><i class="w">,</i></div>
<div class="a ln" style="top:248px">9</div>
<div class="a code" style="top:248px">    <i class="q">"</i><i class="s">pages/type/list</i><i class="q">"</i><i class="w">,</i></div>
<div class="a ln" style="top:272px">10</div>
<div class="a code" style="top:272px">    <i class="q">"</i><i class="s">pages/faxian/faxian</i><i class="q">"</i><i class="w">,</i></div>
<div class="a ln" style="top:296px">11</div>
<div class="a code" style="top:296px">    <i class="q">"</i><i class="s">pages/user/user</i><i class="q">"</i><i class="w">,</i></div>
<div class="a ln" style="top:320px">12</div>
<div class="a code" style="top:320px">    <i class="q">"</i><i class="s">pages/user/vip</i><i class="q">"</i><i class="w">,</i></div>
<div class="a ln" style="top:344px">13</div>
<div class="a code" style="top:344px">    <i class="q">"</i><i class="s">pages/user/faq</i><i class="q">"</i><i class="w">,</i></div>
<div class="a ln" style="top:368px">14</div>
<div class="a code" style="top:368px">    <i class="q">"</i><i class="s">pages/user/about</i><i class="q">"</i><i class="w">,</i></div>
<div class="a ln" style="top:392px">15</div>
<div class="a code" style="top:392px">    <i class="q">"</i><i class="s">pages/user/praise</i><i class="q">"</i><i class="w">,</i></div>
<div class="a ln" style="top:416px">16</div>
<div class="a code" style="top:416px">    <i class="q">"</i><i class="s">pages/user/buy</i><i class="q">"</i><i class="w">,</i></div>
<div class="a ln" style="top:440px">17</div>
<div class="a code" style="top:440px">    <i class="q">"</i><i class="s">pages/user/collect</i><i class="q">"</i><i class="w">,</i></div>
<div class="a ln" style="top:464px">18</div>
<div class="a code" style="top:464px">    <i class="q">"</i><i class="s">pages/user/kami</i><i class="q">"</i><i class="w">,</i></div>
<div class="a ln" style="top:488px">19</div>
<div class="a code" style="top:488px">    <i class="q">"</i><i class="s">pages/user/gengduo</i><i class="q">"</i><i class="w">,</i></div>
<div class="a ln" style="top:512px">20</div>
<div class="a code" style="top:512px">    <i class="q">"</i><i class="s">pages/login/login</i><i class="q">"</i><i class="w">,</i></div>
<div class="a ln" style="top:536px">21</div>
<div class="a code" style="top:536px">    <i class="q">"</i><i class="s">pages/details/details</i><i class="q">"</i><i class="w">,</i></div>
<div class="a ln" style="top:560px">22</div>
<div class="a code" style="top:560px">    <i class="q">"</i><i class="s">pages/list/news</i><i class="q">"</i><i class="w">,</i></div>
<div class="a ln" style="top:584px">23</div>
<div class="a code" style="top:584px">    <i class="q">"</i><i class="s">pages/list/hot</i><i class="q">"</i><i class="w">,</i></div>
<div class="a ln" style="top:608px">24</div>
<div class="a code" style="top:608px">    <i class="q">"</i><i class="s">pages/list/all</i><i class="q">"</i><i class="w">,</i></div>
<div class="a ln" style="top:632px">25</div>
<div class="a code" style="top:632px">    <i class="q">"</i><i class="s">pages/list/vip</i><i class="q">"</i></div>
<div class="a ln" style="top:656px">26</div>
<div class="a code" style="top:656px">  <i class="m">]</i><i class="w">,</i></div>
<div class="a ln" style="top:680px">27</div>
<div class="a code" style="top:680px">  <i class="q">"</i><i class="k1">subPackages</i><i class="q">"</i><i class="q">:</i> <i class="m">[]</i><i class="w">,</i></div>
<div class="a ln" style="top:704px">28</div>
<div class="a code" style="top:704px">  <i class="q">"</i><i class="k1">window</i><i class="q">"</i><i class="q">:</i> <i class="m">{</i></div>
<div class="a ln" style="top:728px">29</div>
<div class="a code" style="top:728px">    <i class="q">"</i><i class="k2">navigationBarTextStyle</i><i class="q">"</i><i class="q">:</i> <i class="q">"</i><i class="s">black</i><i class="q">"</i><i class="w">,</i></div>
<div class="a ln" style="top:752px">30</div>
<div class="a code" style="top:752px">    <i class="q">"</i><i class="k2">navigationBarTitleText</i><i class="q">"</i><i class="q">:</i> <i class="q">"</i><i class="s cj">阮小姐的资源集</i><i class="q">"</i><i class="w">,</i></div>
<div class="a ln" style="top:776px">31</div>
<div class="a code" style="top:776px">    <i class="q">"</i><i class="k2">navigationBarBackgroundColor</i><i class="q">"</i><i class="q">:</i> <i class="q">"</i><i class="s">#FFFFFF</i><i class="q">"</i><i class="w">,</i></div>
<div class="a ln" style="top:800px">32</div>
<div class="a code" style="top:800px">    <i class="q">"</i><i class="k2">backgroundColor</i><i class="q">"</i><i class="q">:</i> <i class="q">"</i><i class="s">#FFFFFF</i><i class="q">"</i></div>
<div class="a ln" style="top:824px">33</div>
<div class="a code" style="top:824px">  <i class="m">}</i><i class="w">,</i></div>
<div class="a ln" style="top:848px">34</div>
<div class="a code" style="top:848px">  <i class="q">"</i><i class="k1">tabBar</i><i class="q">"</i><i class="q">:</i> <i class="m">{</i></div>
<div class="a ln" style="top:872px">35</div>
<div class="a code" style="top:872px">    <i class="q">"</i><i class="k2">color</i><i class="q">"</i><i class="q">:</i> <i class="q">"</i><i class="s">#000000</i><i class="q">"</i><i class="w">,</i></div>
<div class="a ln" style="top:896px">36</div>
<div class="a code" style="top:896px">    <i class="q">"</i><i class="k2">selectedColor</i><i class="q">"</i><i class="q">:</i> <i class="q">"</i><i class="s">#1e90ff</i><i class="q">"</i><i class="w">,</i></div>
<div class="a ln" style="top:920px">37</div>
<div class="a code" style="top:920px">    <i class="q">"</i><i class="k2">backgroundColor</i><i class="q">"</i><i class="q">:</i> <i class="q">"</i><i class="s">#FFFFFF</i><i class="q">"</i><i class="w">,</i></div>
<div class="a" style="left:681px;top:52px;width:15px;height:888px;background:#2f2f2f;border-left:1px solid #444"></div>
<div class="a" style="left:681px;top:52px;width:15px;height:314px;background:#4f4f4f;border-left:1px solid #5a5a5a"></div>
<div class="a" style="left:686px;top:52px;width:5px;height:8px;background:#aaa"></div>
<div class="a" style="left:686px;top:624px;width:5px;height:8px;background:#aaa"></div>
</div>
<svg class="a" style="left:1192px;top:984px" width="205" height="76" viewBox="0 0 205 76"><g font-family="Liberation Sans, sans-serif" stroke-linejoin="round"><g fill="#a6a6a6" stroke="#a6a6a6" stroke-width="6.5"><text x="13" y="55" font-size="45" transform="skewX(-10)" letter-spacing="0">懒人源码</text></g><g fill="#6f6f6f" stroke="#6f6f6f" stroke-width="2.6"><text x="13" y="55" font-size="45" transform="skewX(-10)" letter-spacing="0">懒人源码</text></g></g></svg>
</body></html>
